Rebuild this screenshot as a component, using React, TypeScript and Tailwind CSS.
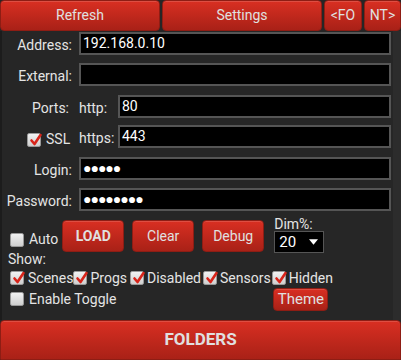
import React from "react";

const btn =
  "flex items-center justify-center rounded-[4px] border border-[#8e1d14] bg-gradient-to-b from-[#d92f22] to-[#a92117] text-[#e0e0e0] shadow-[inset_0_1px_0_rgba(255,255,255,0.15)]";

function Check({ checked }: { checked: boolean }) {
  return (
    <span className="relative inline-flex h-[14px] w-[14px] shrink-0 items-center justify-center rounded-[2px] border border-[#999] bg-gradient-to-b from-[#f2f2f2] to-[#cfcfcf]">
      {checked && (
        <svg viewBox="0 0 14 14" className="absolute left-[1px] top-[-1px] h-[14px] w-[14px]">
          <path d="M2.5 7.5 L5.5 11 L11.5 2" fill="none" stroke="#d8241a" strokeWidth="2.6" strokeLinecap="round" strokeLinejoin="round" />
        </svg>
      )}
    </span>
  );
}

function Input({ value, className = "" }: { value?: string; className?: string }) {
  return (
    <div className={`flex h-[23px] items-center border-2 border-[#555] bg-black px-[2px] text-[14px] text-white ${className}`}>
      {value}
    </div>
  );
}

export default function App() {
  return (
    <div
      className="h-[360px] w-[401px] overflow-hidden bg-[#262626] text-[14px] text-[#e4e4e4]"
      style={{ fontFamily: "Roboto, 'Noto Sans', sans-serif" }}
    >
      <div className="flex h-[31px] gap-[2px]">
        <div className={`${btn} w-[160px]`}>Refresh</div>
        <div className={`${btn} w-[160px]`}>Settings</div>
        <div className={`${btn} w-[38px]`}>&lt;FO</div>
        <div className={`${btn} w-[37px]`}>NT&gt;</div>
      </div>
      <div className="flex h-[289px] flex-col border-l-2 border-r-[8px] border-l-[#1c1c1c] border-r-[#2c2c2c] bg-[#262626] pt-[1px]">
        <div className="flex h-[31px] items-start">
          <div className="w-[70px] pt-[3px] text-right">Address:</div>
          <Input value="192.168.0.10" className="ml-[7px] w-[312px]" />
        </div>
        <div className="flex h-[32px] items-start">
          <div className="w-[70px] pt-[3px] text-right">External:</div>
          <Input className="ml-[7px] w-[312px]" />
        </div>
        <div className="flex h-[30px] items-start">
          <div className="w-[67px] pt-[3px] text-right">Ports:</div>
          <div className="ml-[10px] w-[39px] pt-[3px]">http:</div>
          <Input value="80" className="w-[273px]" />
        </div>
        <div className="flex h-[32px] items-start">
          <div className="flex w-[77px] items-center pl-[25px] pt-[4px]">
            <Check checked />
            <span className="ml-[5px]">SSL</span>
          </div>
          <div className="w-[39px] pt-[3px]">https:</div>
          <Input value="443" className="w-[273px]" />
        </div>
        <div className="flex h-[31px] items-start">
          <div className="w-[70px] pt-[3px] text-right">Login:</div>
          <Input value="●●●●●" className="ml-[7px] w-[312px] text-[11px] tracking-[-1px]" />
        </div>
        <div className="flex h-[29px] items-start">
          <div className="w-[70px] pt-[3px] text-right">Password:</div>
          <Input value="●●●●●●●●" className="ml-[7px] w-[312px] text-[11px] tracking-[-1px]" />
        </div>
        <div className="flex h-[34px] items-start">
          <div className="flex items-center pl-[8px] pt-[12px]">
            <Check checked={false} />
            <span className="ml-[5px]">Auto</span>
          </div>
          <div className="ml-[4px] mt-[3px] flex gap-[8px]">
            <div className={`${btn} h-[32px] w-[62px] font-bold`}>LOAD</div>
            <div className={`${btn} h-[32px] w-[62px]`}>Clear</div>
            <div className={`${btn} h-[32px] w-[62px]`}>Debug</div>
          </div>
          <div className="ml-[10px] flex flex-col">
            <div className="h-[14px] leading-[14px]">Dim%:</div>
            <div className="flex h-[22px] w-[50px] items-center justify-between border border-[#555] bg-black pl-[4px] pr-[5px] text-[15px] text-white">
              <span>20</span>
              <svg viewBox="0 0 10 6" className="h-[6px] w-[9px]">
                <path d="M0 0 L10 0 L5 6 Z" fill="#fff" />
              </svg>
            </div>
          </div>
        </div>
        <div className="h-[16px] pl-[6px] leading-[16px]">Show:</div>
        <div className="mt-[2px] flex h-[18px] items-center pl-[8px]">
          <Check checked />
          <span className="ml-[4px]">Scenes</span>
          <Check checked />
          <span className="ml-[3px] mr-[3px]">Progs</span>
          <Check checked />
          <span className="ml-[3px] mr-[2px]">Disabled</span>
          <Check checked />
          <span className="ml-[3px] mr-[1px]">Sensors</span>
          <Check checked />
          <span className="ml-[3px]">Hidden</span>
        </div>
        <div className="flex h-[24px] items-center pl-[8px]">
          <Check checked={false} />
          <span className="ml-[5px]">Enable Toggle</span>
          <div className={`${btn} ml-[157px] h-[23px] w-[55px] text-[15px]`}>Theme</div>
        </div>
      </div>
      <div className={`${btn} h-[40px] w-[401px] rounded-b-none text-[17px] font-bold`}>FOLDERS</div>
    </div>
  );
}
